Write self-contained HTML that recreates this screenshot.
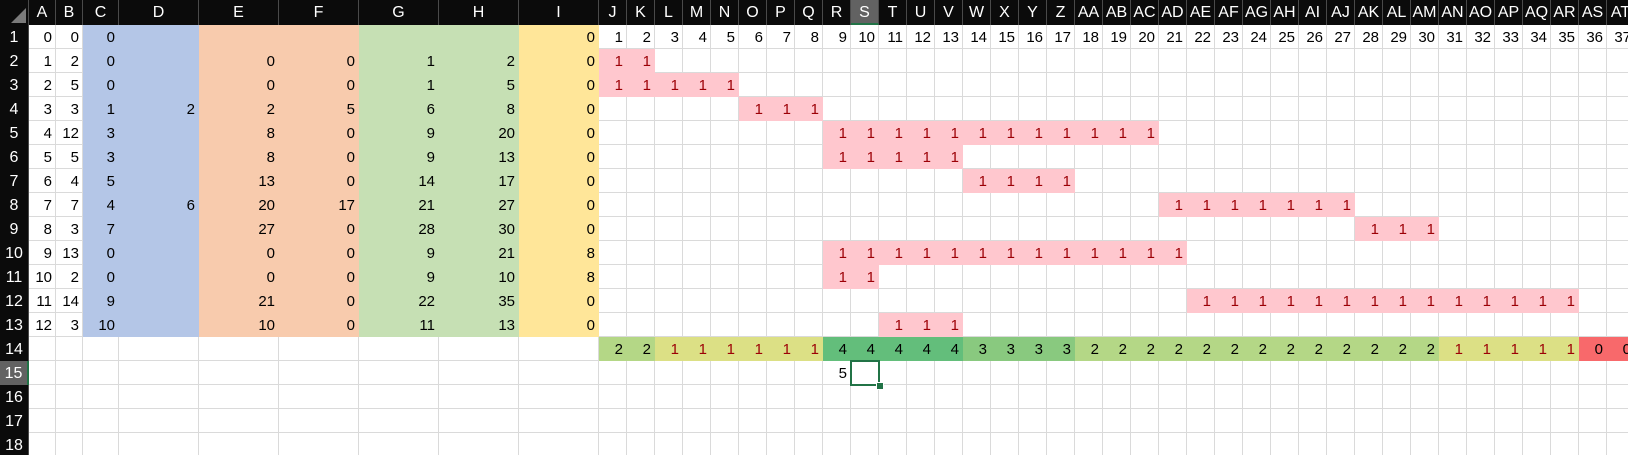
<!DOCTYPE html>
<html><head><meta charset="utf-8">
<style>
html,body{margin:0;padding:0;background:#fff;overflow:hidden}
body{width:1628px;height:455px;position:relative;font-family:"Liberation Sans",sans-serif;font-size:15px;color:#000}
.gv{position:absolute;top:25px;height:430px;width:1px;background:#dadada}
.r{position:absolute;left:29px;height:24px;line-height:25px;display:flex;white-space:nowrap}
.k{position:absolute;height:24px;line-height:25px;display:flex;white-space:nowrap}
.r span,.k span{flex:none;box-sizing:border-box;text-align:right;padding-right:4px;display:block}
.a{width:27px}.c{width:36px}.d{width:80px}.j{width:28px}
.rd{color:#9c0006}
.p{background:#ffc7ce;color:#9c0006}
#hd{position:absolute;left:0;top:0;width:1628px;height:25px;background:#0b0b0b;display:flex;color:#fff;line-height:25px;white-space:nowrap;font-size:16px}
#hd span{flex:none;box-sizing:border-box;text-align:center;border-right:1px solid #4a4a4a;display:block;height:25px}
#rh{position:absolute;left:0;top:25px;width:29px;height:430px;background:#0b0b0b;color:#fff;font-size:16px}
#rh div{height:24px;line-height:25px;text-align:center;box-sizing:border-box;border-right:1px solid #4a4a4a}
</style></head><body>
<div style="position:absolute;left:29px;right:0;top:25px;bottom:0;background:repeating-linear-gradient(to bottom,transparent 0 23px,#dadada 23px 24px)"></div>
<div style="position:absolute;left:599px;right:0;top:25px;bottom:0;background:repeating-linear-gradient(to right,transparent 0 27px,#dadada 27px 28px)"></div>
<div class="gv" style="left:55px"></div><div class="gv" style="left:82px"></div><div class="gv" style="left:118px"></div><div class="gv" style="left:198px"></div><div class="gv" style="left:278px"></div><div class="gv" style="left:358px"></div><div class="gv" style="left:438px"></div><div class="gv" style="left:518px"></div><div class="gv" style="left:598px"></div>
<div style="position:absolute;left:83px;top:25px;width:116px;height:312px;background:#b4c6e7"></div>
<div style="position:absolute;left:199px;top:25px;width:160px;height:312px;background:#f8cbad"></div>
<div style="position:absolute;left:359px;top:25px;width:160px;height:312px;background:#c6e0b4"></div>
<div style="position:absolute;left:519px;top:25px;width:80px;height:312px;background:#ffe699"></div>

<div class="r" style="top:25px"><span class="a">0</span><span class="a">0</span><span class="c">0</span><span class="d"></span><span class="d"></span><span class="d"></span><span class="d"></span><span class="d"></span><span class="d">0</span></div>
<div class="r" style="top:49px"><span class="a">1</span><span class="a">2</span><span class="c">0</span><span class="d"></span><span class="d">0</span><span class="d">0</span><span class="d">1</span><span class="d">2</span><span class="d">0</span></div>
<div class="r" style="top:73px"><span class="a">2</span><span class="a">5</span><span class="c">0</span><span class="d"></span><span class="d">0</span><span class="d">0</span><span class="d">1</span><span class="d">5</span><span class="d">0</span></div>
<div class="r" style="top:97px"><span class="a">3</span><span class="a">3</span><span class="c">1</span><span class="d">2</span><span class="d">2</span><span class="d">5</span><span class="d">6</span><span class="d">8</span><span class="d">0</span></div>
<div class="r" style="top:121px"><span class="a">4</span><span class="a">12</span><span class="c">3</span><span class="d"></span><span class="d">8</span><span class="d">0</span><span class="d">9</span><span class="d">20</span><span class="d">0</span></div>
<div class="r" style="top:145px"><span class="a">5</span><span class="a">5</span><span class="c">3</span><span class="d"></span><span class="d">8</span><span class="d">0</span><span class="d">9</span><span class="d">13</span><span class="d">0</span></div>
<div class="r" style="top:169px"><span class="a">6</span><span class="a">4</span><span class="c">5</span><span class="d"></span><span class="d">13</span><span class="d">0</span><span class="d">14</span><span class="d">17</span><span class="d">0</span></div>
<div class="r" style="top:193px"><span class="a">7</span><span class="a">7</span><span class="c">4</span><span class="d">6</span><span class="d">20</span><span class="d">17</span><span class="d">21</span><span class="d">27</span><span class="d">0</span></div>
<div class="r" style="top:217px"><span class="a">8</span><span class="a">3</span><span class="c">7</span><span class="d"></span><span class="d">27</span><span class="d">0</span><span class="d">28</span><span class="d">30</span><span class="d">0</span></div>
<div class="r" style="top:241px"><span class="a">9</span><span class="a">13</span><span class="c">0</span><span class="d"></span><span class="d">0</span><span class="d">0</span><span class="d">9</span><span class="d">21</span><span class="d">8</span></div>
<div class="r" style="top:265px"><span class="a">10</span><span class="a">2</span><span class="c">0</span><span class="d"></span><span class="d">0</span><span class="d">0</span><span class="d">9</span><span class="d">10</span><span class="d">8</span></div>
<div class="r" style="top:289px"><span class="a">11</span><span class="a">14</span><span class="c">9</span><span class="d"></span><span class="d">21</span><span class="d">0</span><span class="d">22</span><span class="d">35</span><span class="d">0</span></div>
<div class="r" style="top:313px"><span class="a">12</span><span class="a">3</span><span class="c">10</span><span class="d"></span><span class="d">10</span><span class="d">0</span><span class="d">11</span><span class="d">13</span><span class="d">0</span></div>

<div class="k" style="left:599px;top:25px;background:#fff"><span class="j">1</span><span class="j">2</span><span class="j">3</span><span class="j">4</span><span class="j">5</span><span class="j">6</span><span class="j">7</span><span class="j">8</span><span class="j">9</span><span class="j">10</span><span class="j">11</span><span class="j">12</span><span class="j">13</span><span class="j">14</span><span class="j">15</span><span class="j">16</span><span class="j">17</span><span class="j">18</span><span class="j">19</span><span class="j">20</span><span class="j">21</span><span class="j">22</span><span class="j">23</span><span class="j">24</span><span class="j">25</span><span class="j">26</span><span class="j">27</span><span class="j">28</span><span class="j">29</span><span class="j">30</span><span class="j">31</span><span class="j">32</span><span class="j">33</span><span class="j">34</span><span class="j">35</span><span class="j">36</span><span class="j">37</span></div>
<div style="position:absolute;left:599px;top:25px;width:1029px;height:24px;background:repeating-linear-gradient(to right,transparent 0 27px,#dadada 27px 28px);pointer-events:none"></div>
<div style="position:absolute;left:599px;top:48px;width:1029px;height:1px;background:#dadada"></div>

<div class="k p" style="left:599px;top:49px"><span class="j">1</span><span class="j">1</span></div>
<div class="k p" style="left:599px;top:73px"><span class="j">1</span><span class="j">1</span><span class="j">1</span><span class="j">1</span><span class="j">1</span></div>
<div class="k p" style="left:739px;top:97px"><span class="j">1</span><span class="j">1</span><span class="j">1</span></div>
<div class="k p" style="left:823px;top:121px"><span class="j">1</span><span class="j">1</span><span class="j">1</span><span class="j">1</span><span class="j">1</span><span class="j">1</span><span class="j">1</span><span class="j">1</span><span class="j">1</span><span class="j">1</span><span class="j">1</span><span class="j">1</span></div>
<div class="k p" style="left:823px;top:145px"><span class="j">1</span><span class="j">1</span><span class="j">1</span><span class="j">1</span><span class="j">1</span></div>
<div class="k p" style="left:963px;top:169px"><span class="j">1</span><span class="j">1</span><span class="j">1</span><span class="j">1</span></div>
<div class="k p" style="left:1159px;top:193px"><span class="j">1</span><span class="j">1</span><span class="j">1</span><span class="j">1</span><span class="j">1</span><span class="j">1</span><span class="j">1</span></div>
<div class="k p" style="left:1355px;top:217px"><span class="j">1</span><span class="j">1</span><span class="j">1</span></div>
<div class="k p" style="left:823px;top:241px"><span class="j">1</span><span class="j">1</span><span class="j">1</span><span class="j">1</span><span class="j">1</span><span class="j">1</span><span class="j">1</span><span class="j">1</span><span class="j">1</span><span class="j">1</span><span class="j">1</span><span class="j">1</span><span class="j">1</span></div>
<div class="k p" style="left:823px;top:265px"><span class="j">1</span><span class="j">1</span></div>
<div class="k p" style="left:1187px;top:289px"><span class="j">1</span><span class="j">1</span><span class="j">1</span><span class="j">1</span><span class="j">1</span><span class="j">1</span><span class="j">1</span><span class="j">1</span><span class="j">1</span><span class="j">1</span><span class="j">1</span><span class="j">1</span><span class="j">1</span><span class="j">1</span></div>
<div class="k p" style="left:879px;top:313px"><span class="j">1</span><span class="j">1</span><span class="j">1</span></div>

<div class="k" style="left:599px;top:337px;background:#b4d786"><span class="j">2</span><span class="j">2</span></div>
<div class="k rd" style="left:655px;top:337px;background:#dce085"><span class="j">1</span><span class="j">1</span><span class="j">1</span><span class="j">1</span><span class="j">1</span><span class="j">1</span></div>
<div class="k" style="left:823px;top:337px;background:#63be7b"><span class="j">4</span><span class="j">4</span><span class="j">4</span><span class="j">4</span><span class="j">4</span></div>
<div class="k" style="left:963px;top:337px;background:#89c97f"><span class="j">3</span><span class="j">3</span><span class="j">3</span><span class="j">3</span></div>
<div class="k" style="left:1075px;top:337px;background:#b4d786"><span class="j">2</span><span class="j">2</span><span class="j">2</span><span class="j">2</span><span class="j">2</span><span class="j">2</span><span class="j">2</span><span class="j">2</span><span class="j">2</span><span class="j">2</span><span class="j">2</span><span class="j">2</span><span class="j">2</span></div>
<div class="k rd" style="left:1439px;top:337px;background:#dce085"><span class="j">1</span><span class="j">1</span><span class="j">1</span><span class="j">1</span><span class="j">1</span></div>
<div class="k" style="left:1579px;top:337px;background:#f8696b"><span class="j">0</span><span class="j">0</span></div>

<div class="k" style="left:823px;top:361px"><span class="j">5</span></div>
<div style="position:absolute;left:850px;top:360px;width:30px;height:26px;box-sizing:border-box;border:2px solid #217346"></div>
<div style="position:absolute;left:876px;top:382px;width:6px;height:6px;background:#217346;border:1px solid #fff"></div>

<div id="hd"><span style="width:29px;position:relative"><i style="position:absolute;left:11px;top:8px;width:0;height:0;border-left:15px solid transparent;border-bottom:15px solid #7b7b7b"></i></span><span style="width:27px">A</span><span style="width:27px">B</span><span style="width:36px">C</span><span style="width:80px">D</span><span style="width:80px">E</span><span style="width:80px">F</span><span style="width:80px">G</span><span style="width:80px">H</span><span style="width:80px">I</span><span style="width:28px">J</span><span style="width:28px">K</span><span style="width:28px">L</span><span style="width:28px">M</span><span style="width:28px">N</span><span style="width:28px">O</span><span style="width:28px">P</span><span style="width:28px">Q</span><span style="width:28px">R</span><span style="width:28px;background:#626262;border-bottom:2px solid #217346">S</span><span style="width:28px">T</span><span style="width:28px">U</span><span style="width:28px">V</span><span style="width:28px">W</span><span style="width:28px">X</span><span style="width:28px">Y</span><span style="width:28px">Z</span><span style="width:28px">AA</span><span style="width:28px">AB</span><span style="width:28px">AC</span><span style="width:28px">AD</span><span style="width:28px">AE</span><span style="width:28px">AF</span><span style="width:28px">AG</span><span style="width:28px">AH</span><span style="width:28px">AI</span><span style="width:28px">AJ</span><span style="width:28px">AK</span><span style="width:28px">AL</span><span style="width:28px">AM</span><span style="width:28px">AN</span><span style="width:28px">AO</span><span style="width:28px">AP</span><span style="width:28px">AQ</span><span style="width:28px">AR</span><span style="width:28px">AS</span><span style="width:28px">AT</span></div>

<div id="rh"><div>1</div><div>2</div><div>3</div><div>4</div><div>5</div><div>6</div><div>7</div><div>8</div><div>9</div><div>10</div><div>11</div><div>12</div><div>13</div><div>14</div><div style="background:#626262;border-right:2px solid #217346">15</div><div>16</div><div>17</div><div>18</div></div>
</body></html>
